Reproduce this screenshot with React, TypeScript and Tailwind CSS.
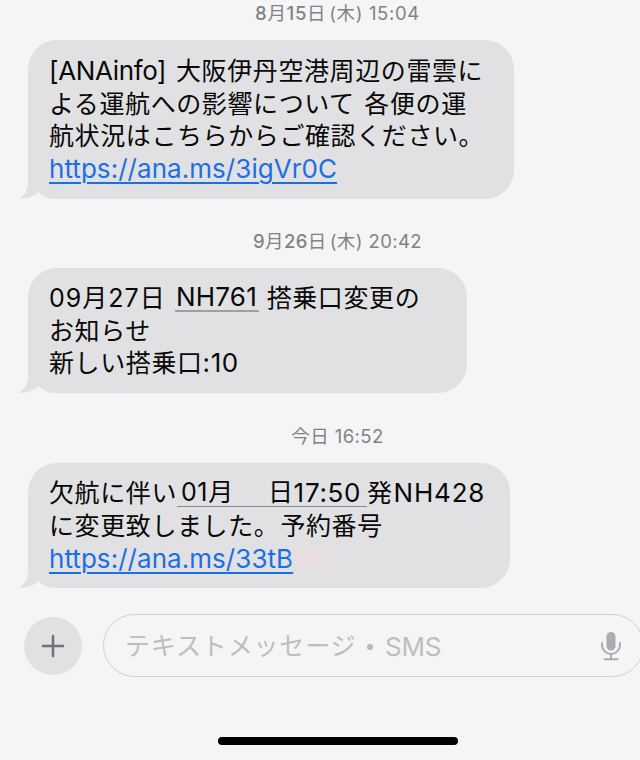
import type { ReactNode } from "react";

function Tail() {
  return (
    <svg className="absolute -left-[9px] bottom-0" width="34" height="30" viewBox="0 0 34 30" fill="none">
      <path d="M9 0V13C9 20 6 27 0 29.4C7 30.6 15 28 19.8 22.8C23 26.5 27 29.3 34 30V0Z" fill="#e1e1e3" />
    </svg>
  );
}

function Bubble({ className, children }: { className: string; children: ReactNode }) {
  return (
    <div className={`relative ml-7 rounded-[29px] bg-[#e1e1e3] pl-[21px] ${className}`}>
      <Tail />
      {children}
    </div>
  );
}

function Line({ className = "tracking-[0.6px]", children }: { className?: string; children: ReactNode }) {
  return <div className={`relative flex h-[32.6px] items-center whitespace-pre leading-[32px] ${className}`}>{children}</div>;
}

function Link({ children }: { children: ReactNode }) {
  return (
    <a className="text-[26px] tracking-[0.05px] text-[#1c6fe3] underline decoration-[1.5px] underline-offset-[4px]">{children}</a>
  );
}

function Stamp({ className, children }: { className: string; children: ReactNode }) {
  return (
    <div className={`flex h-6 w-[675px] items-center justify-center whitespace-pre text-[18.5px] leading-6 text-[#828286] ${className}`}>
      {children}
    </div>
  );
}

function Digits({ children }: { children: ReactNode }) {
  return <span className="font-medium">{children}</span>;
}

export default function App() {
  return (
    <main className="relative h-[760px] w-[640px] overflow-hidden bg-[#f5f5f5] font-['Inter','Noto_Sans_CJK_JP',sans-serif] text-[25px] text-[#080808]">
      <div className="flex flex-col pt-px">
        <Stamp className="tracking-[0.65px]">
          <Digits>8</Digits>月<Digits>15</Digits>日<span className="ml-[3px]">(木)</span><span> 15:04</span>
        </Stamp>
        <Bubble className="mt-[15px] h-[159px] w-[486px] pt-[15px]">
          <Line><span className="w-[127px] text-[26px] tracking-[-0.35px]">[ANAinfo]</span>大阪伊丹空港周辺の雷雲に</Line>
          <Line>よる運航への影響について<span className="ml-[2px]"> 各便の運</span></Line>
          <Line>航状況はこちらからご確認ください。</Line>
          <Line><Link>https://ana.ms/3igVr0C</Link></Line>
        </Bubble>
        <Stamp className="mt-[30px] tracking-[0.4px]">
          <Digits>9</Digits>月<Digits>26</Digits>日<span className="ml-[3px]">(木)</span><span> 20:42</span>
        </Stamp>
        <Bubble className="mt-[15px] h-[125px] w-[439px] pt-[14px]">
          <Line><span className="w-[126px] tracking-[1px]">09月27日</span><span className="w-[84px] border-b-2 border-[#a0a0a3] pl-px text-[26px] leading-[26px] tracking-[0.2px]">NH761</span><span> 搭乗口変更の</span></Line>
          <Line>お知らせ</Line>
          <Line>新しい搭乗口<span className="text-[26px]">:10</span></Line>
        </Bubble>
        <Stamp className="mt-[31px] tracking-[0.4px]">今日<span> 16:52</span></Stamp>
        <Bubble className="mt-[15px] h-[125px] w-[482px] pt-[14px]">
          <Line><span className="w-[128px]">欠航に伴い</span><span className="flex w-[190px] border-b border-[#88888b] pl-[4px] leading-[27px]"><span className="w-[87px]">01月</span>日<span className="text-[26px] tracking-[0.7px]">17:50</span></span><span>発</span><span className="ml-px text-[26px] tracking-[0.8px]">NH428</span></Line>
          <Line>に変更致しました。<span className="ml-px">予約番号</span></Line>
          <Line className="pt-px"><Link>https://ana.ms/33tB</Link><span className="h-5 w-10 rounded-full bg-[#f3dcda]/50 blur-[5px]" /></Line>
        </Bubble>
      </div>
      <div className="mt-[26px] flex items-center">
        <button className="ml-6 flex size-[58px] shrink-0 items-center justify-center rounded-full bg-[#e0e1e3]">
          <svg width="24" height="24" viewBox="0 0 24 24" stroke="#707176" strokeWidth="2.5" strokeLinecap="round">
            <path d="M2 12H22M12 2V22" />
          </svg>
        </button>
        <div className="ml-[21px] flex h-[63px] w-[541px] shrink-0 items-center rounded-full border-[1.5px] border-[#d0d0d2] pl-[21px] text-[#bdbdc0]">
          <div className="flex w-[476px] items-center whitespace-pre pt-0.5 tracking-[0.85px]">
            <span className="w-[242px]">テキストメッセージ</span>
            <span className="size-1.5 rounded-full bg-[#b8b8bb]" />
            <span className="ml-[12px] text-[26px] tracking-[-0.2px]">SMS</span>
          </div>
          <svg width="20" height="30" viewBox="0 0 20 30" fill="none" stroke="#a9adb3" strokeWidth="2" strokeLinecap="round">
            <rect x="5.5" y="1" width="9" height="18.5" rx="4.5" fill="#a9adb3" stroke="none" />
            <path d="M1 12V14A9 9 0 0 0 19 14V12M10 23V28M3.5 28.2H16.5" />
          </svg>
        </div>
      </div>
      <div className="ml-[218px] mt-[60px] h-2 w-[240px] rounded-full bg-black" />
    </main>
  );
}
